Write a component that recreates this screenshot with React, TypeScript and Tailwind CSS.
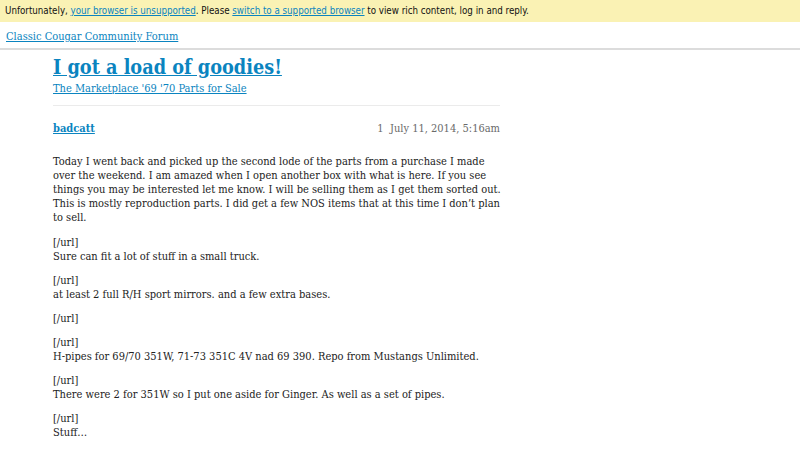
export default function App() {
  const paras: string[][] = [
    ["[/url]", "Sure can fit a lot of stuff in a small truck."],
    ["[/url]", "at least 2 full R/H sport mirrors. and a few extra bases."],
    ["[/url]"],
    ["[/url]", "H-pipes for 69/70 351W, 71-73 351C 4V nad 69 390. Repo from Mustangs Unlimited."],
    ["[/url]", "There were 2 for 351W so I put one aside for Ginger. As well as a set of pipes."],
    ["[/url]", "Stuff…"],
  ];

  return (
    <div className="w-[800px] h-[450px] overflow-hidden bg-white font-['DejaVu_Serif_Condensed','DejaVu_Serif',serif] text-[#222]">
      <div className="h-[22px] bg-[#faf2b4] px-[5px] flex items-center text-[9.7px] font-['DejaVu_Sans_Condensed','DejaVu_Sans',sans-serif] text-[#111]">
        <span>
          Unfortunately, <a className="text-[#0a84c0] underline">your browser is unsupported</a>. Please{" "}
          <a className="text-[#0a84c0] underline">switch to a supported browser</a> to view rich content, log in and reply.
        </span>
      </div>
      <header className="h-[28px] pt-[8px] px-[6px] border-b-2 border-[#dcdcdc]">
        <a className="block text-[11px] leading-[14px] text-[#0a84c0] underline">Classic Cougar Community Forum</a>
      </header>
      <main className="ml-[53px] w-[447px]">
        <h1 className="mt-[6px] text-[19.7px] font-bold leading-[24px]">
          <a className="text-[#0a84c0] underline">I got a load of goodies!</a>
        </h1>
        <div className="mt-[2px] text-[11px] leading-[14px]">
          <a className="text-[#0a84c0] underline">The Marketplace '69 '70 Parts for Sale</a>
        </div>
        <hr className="mt-[9px] border-[#ebebeb]" />
        <div className="mt-[16px] flex justify-between text-[11px] leading-[14px]">
          <a className="font-bold text-[#0a84c0] underline">badcatt</a>
          <span className="text-[#6a6a6a]">1&nbsp; July 11, 2014, 5:16am</span>
        </div>
        <div className="mt-[19px] w-[452px] text-[11px] leading-[14px]">
          <p className="mb-[11px]">
            Today I went back and picked up the second lode of the parts from a purchase I made over the weekend. I am
            amazed when I open another box with what is here. If you see things you may be interested let me know. I
            will be selling them as I get them sorted out. This is mostly reproduction parts. I did get a few NOS items
            that at this time I don’t plan to sell.
          </p>
          {paras.map((lines, i) => (
            <p key={i} className="mb-[10px]">
              {lines.map((l, j) => (
                <span key={j} className="block">
                  {l}
                </span>
              ))}
            </p>
          ))}
        </div>
      </main>
    </div>
  );
}
